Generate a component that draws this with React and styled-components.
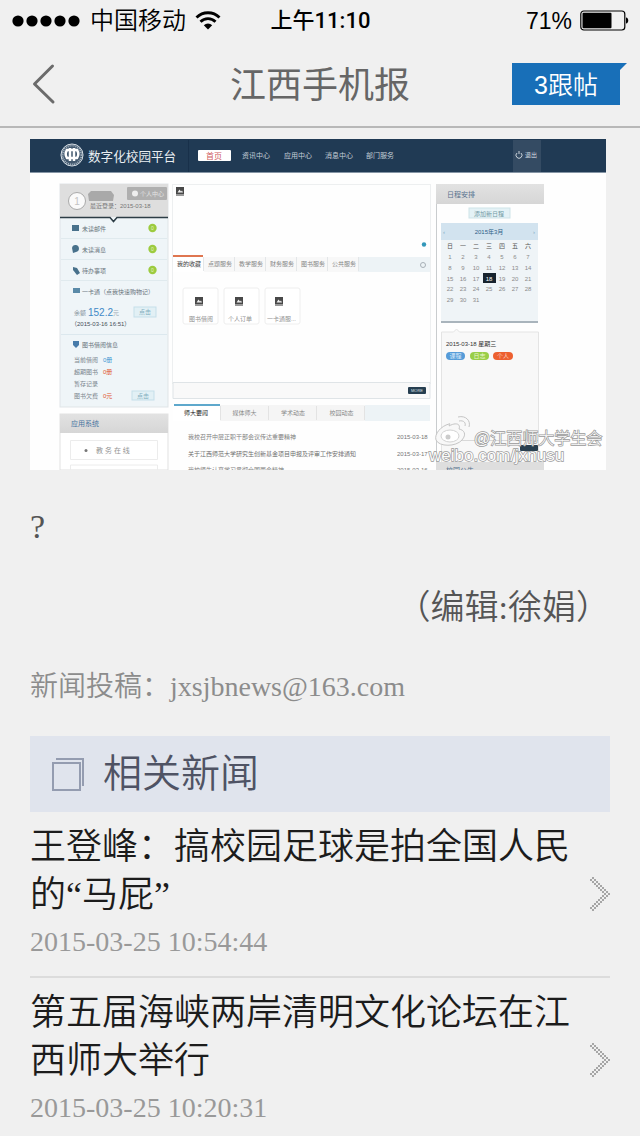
import React from "react";
import styled, { createGlobalStyle } from "styled-components";

const GlobalStyle = createGlobalStyle`
  * {
    box-sizing: border-box;
  }
  body {
    margin: 0;
    background: #f0f0f0;
    overflow-x: hidden;
  }
`;

const sans = `"Liberation Sans", "Noto Sans CJK SC", sans-serif`;
const serif = `"Liberation Serif", "Noto Sans CJK SC", serif`;

const Page = styled.div`
  display: flex;
  flex-direction: column;
  background: #f0f0f0;
  font-family: ${serif};
  font-weight: 350;
`;

const StatusBar = styled.div`
  display: grid;
  grid-template-columns: 1fr auto 1fr;
  align-items: center;
  height: 42px;
  padding: 0 11px 0 12px;
  font-family: ${sans};
  font-size: 24px;
  line-height: 42px;
  color: #000;
`;

const Carrier = styled.div`
  display: flex;
  align-items: center;
  gap: 9px;
`;

const Clock = styled.div`
  font-family: Roboto, "Noto Sans CJK SC", sans-serif;
  font-size: 22px;
  font-weight: 500;
`;

const Power = styled.div`
  display: flex;
  align-items: center;
  justify-content: flex-end;
  gap: 8px;
  font-size: 23px;
`;

const Header = styled.header`
  display: grid;
  grid-template-columns: 1fr auto 1fr;
  align-items: center;
  height: 86px;
  padding: 0 20px;
  border-bottom: 2px solid #b8b8b8;
  font-family: ${sans};
`;

const BackButton = styled.button`
  display: flex;
  width: 40px;
  padding: 0 0 0 10px;
  border: none;
  background: none;
  cursor: pointer;
`;

const HeaderTitle = styled.h1`
  margin: 0;
  padding-top: 4px;
  font-size: 36px;
  line-height: 48px;
  font-weight: 400;
  color: #666;
`;

const ReplyButton = styled.button`
  position: relative;
  justify-self: end;
  width: 108px;
  height: 42px;
  padding: 2px 0 0;
  border: none;
  background: #186fb8;
  color: #fff;
  font-family: ${sans};
  font-size: 25px;
  line-height: 40px;
  font-weight: 350;
  cursor: pointer;

  &::after {
    content: "";
    position: absolute;
    left: 100%;
    top: 0;
    border-top: 7px solid #186fb8;
    border-right: 7px solid transparent;
  }
`;

const Article = styled.main`
  display: flex;
  flex-direction: column;
  padding: 11px 30px 0;
`;

const Photo = styled.svg`
  display: block;
  width: calc(100% - 4px);
  height: auto;
  font-family: ${sans};
  font-weight: 400;
`;

const Paragraph = styled.p`
  margin: 33px 0 0;
  font-size: 34px;
  line-height: 48px;
  color: #555;
  text-align: ${(props) => (props.$right ? "right" : "left")};
`;

const Submission = styled.p`
  margin: 32px 0 26px;
  font-size: 28px;
  line-height: 46px;
  color: #8c8c8c;
`;

const MailLink = styled.a`
  color: inherit;
  text-decoration: none;
`;

const SectionTitle = styled.h2`
  display: flex;
  align-items: center;
  gap: 18px;
  height: 76px;
  margin: 0;
  padding: 0 22px;
  background: #e0e4ed;
  color: #4f5364;
  font-size: 39px;
  line-height: 76px;
  font-weight: 350;
`;

const NewsList = styled.ul`
  margin: 0;
  padding: 0;
  list-style: none;
`;

const NewsItem = styled.li`
  border-bottom: 2px solid #dcdcdc;
`;

const NewsLink = styled.a`
  display: flex;
  align-items: center;
  justify-content: space-between;
  gap: 10px;
  padding: 11px 0;
  text-decoration: none;
`;

const NewsBody = styled.div`
  flex: 1;
`;

const NewsTitle = styled.h3`
  margin: 0;
  font-size: 36px;
  line-height: 48px;
  font-weight: 350;
  color: #1c1c1c;
`;

const NewsTime = styled.time`
  display: block;
  font-size: 28px;
  line-height: 46px;
  color: #999;
`;

const news = [
  { title: "王登峰：搞校园足球是拍全国人民的“马屁”", time: "2015-03-25 10:54:44" },
  { title: "第五届海峡两岸清明文化论坛在江西师大举行", time: "2015-03-25 10:20:31" },
];

const SignalDots = () => (
  <svg width="69" height="14" viewBox="0 0 69 14">
    {[6, 20, 34, 48, 62].map((x) => (
      <circle key={x} cx={x} cy="7" r="5.6" />
    ))}
  </svg>
);

const WifiIcon = () => (
  <svg width="26" height="20" viewBox="0 0 26 20" fill="none" stroke="#000" strokeWidth="2.8">
    <path d="M1.5 6.5a16.3 16.3 0 0 1 23 0" />
    <path d="M5.500 10.800a10.600 10.600 0 0 1 15 0" />
    <path d="M13 18.500 8.800 14.200a6 6 0 0 1 8.400 0z" fill="#000" stroke="none" />
  </svg>
);

const BatteryIcon = () => (
  <svg width="49" height="22" viewBox="0 0 49 22">
    <rect x="0.8" y="1" width="44" height="19" rx="3" fill="none" stroke="#000" strokeWidth="1.2" />
    <rect x="2.5" y="2.7" width="29" height="15.6" rx="1" />
    <path d="M46 7.5c3 0 3 6 0 6z" />
  </svg>
);

const BackIcon = () => (
  <svg width="30" height="42" viewBox="0 0 30 42" fill="none" stroke="#6b6b6b" strokeWidth="3">
    <path d="M22.500 3 4.500 21l18.500 18" strokeLinecap="round" strokeLinejoin="round" />
  </svg>
);

const StackIcon = () => (
  <svg width="33" height="33" viewBox="0 0 33 33" fill="none" stroke="#949cb0" strokeWidth="2">
    <rect x="1" y="5" width="27" height="27" />
    <path d="M4 1h27v27" />
  </svg>
);

// arrow made of a 2px checker pattern, two cells per row
const ChevronIcon = () => {
  const cells = [];
  for (let row = 0; row < 17; row += 1) {
    const col = row <= 8 ? row : 16 - row;
    [col - 1, col + 1].forEach((c) => {
      if (c >= 0) {
        cells.push(<rect key={`${row}-${c}`} x={c * 2} y={row * 2} width="2" height="2" />);
      }
    });
  }
  return (
    <svg width="20" height="34" viewBox="0 0 20 34" fill="#a6a6a6">
      {cells}
    </svg>
  );
};

const menu = [
  [242, "资讯中心"],
  [284, "应用中心"],
  [325, "消息中心"],
  [366, "部门服务"],
];

const sideRows = [
  [228, "未读邮件"],
  [249, "未读消息"],
  [270, "待办事项"],
];

const serviceTabs = ["我的收藏", "点题服务", "教学服务", "财务服务", "图书服务", "公共服务"];
const newsTabs = ["师大要闻", "媒体师大", "学术动态", "校园动态"];
const weekDays = ["日", "一", "二", "三", "四", "五", "六"];
const monthDays = Array.from({ length: 31 }, (_, i) => i + 1);

const PicGlyph = ({ x, y }) => (
  <g>
    <rect x={x} y={y} width="8" height="9" fill="#484848" />
    <path d={`M${x + 1.5} ${y + 5.5}l2-3 1.5 2 1-1 1 2z`} fill="#eee" />
    <rect x={x} y={y + 7} width="8" height="2" fill="#999" />
  </g>
);

const PortalPhoto = () => (
  <Photo viewBox="30 139 576 331" role="img" aria-label="数字化校园平台">
    <defs>
      <linearGradient id="bar" x1="0" y1="0" x2="0" y2="1">
        <stop offset="0" stopColor="#e2e2e2" />
        <stop offset="1" stopColor="#d6d6d6" />
      </linearGradient>
    </defs>
    <rect x="30" y="139" width="576" height="331" fill="#fefefe" />

    <rect x="30" y="139" width="576" height="34" fill="#203a54" />
    <path d="M30 172.5h576" stroke="#8595a5" />
    <path d="M188.5 140v32" stroke="#18304a" />
    <circle cx="72" cy="155" r="11" fill="#42586e" stroke="#dbe2e8" />
    <circle cx="72" cy="155" r="9.5" fill="none" stroke="#a8b6c3" strokeWidth="2" strokeDasharray="1 1" />
    <path
      d="M67 150c-2 3-2 5 0 8h10c2-3 2-5 0-8zM70 148v13M74 148v13"
      fill="none"
      stroke="#fff"
      strokeWidth="2.500"
    />
    <text x="88" y="161" fontSize="12.600" fill="#e8edf1">数字化校园平台</text>
    <rect x="198" y="150" width="33" height="11" rx="1" fill="#fff" />
    <text x="214" y="159" fontSize="8" textAnchor="middle" fill="#cf5a5e">首页</text>
    {menu.map(([x, label]) => (
      <text key={label} x={x} y="158" fontSize="7" fill="#c4ced7">{label}</text>
    ))}
    <rect x="513" y="140" width="28" height="32" fill="#344b63" />
    <path d="M517 153a3 3 0 1 0 4 0M519 151v3" fill="none" stroke="#c9d2da" />
    <text x="525" y="157" fontSize="6" fill="#d5dce2">退出</text>

    <rect x="60" y="184" width="108" height="223" fill="#eff5f8" stroke="#dfe4e7" />
    <rect x="60" y="184" width="108" height="33" fill="#dedede" />
    <circle cx="77" cy="201" r="8.5" fill="#fafafa" stroke="#aaa" />
    <text x="77" y="205" fontSize="10" textAnchor="middle" fill="#c3c3c3">1</text>
    <path d="M91 191h20l3 4-1 6H89l-1-7z" fill="#a9a9a9" />
    <rect x="127" y="187" width="40" height="13" rx="1" fill="#afafaf" />
    <circle cx="135" cy="193.500" r="3" fill="#eee" />
    <text x="140" y="196" fontSize="6" fill="#e4e4e4">个人中心</text>
    <text x="90" y="208" fontSize="6" fill="#777">最近登录：2015-03-18</text>
    <path d="M60 217.500h50l3.500 4 3.500-4h51" fill="none" stroke="#2d3d46" strokeWidth="1.500" />
    {sideRows.map(([y, label]) => (
      <g key={label}>
        <path d={`M61 ${y + 10.5}h106`} stroke="#e0eaee" />
        <text x="82" y={y + 3} fontSize="6" fill="#68747c">{label}</text>
        <circle cx="152.500" cy={y} r="4.200" fill="#9ccb3f" />
        <text x="152.500" y={y + 2} fontSize="5" textAnchor="middle" fill="#e4f2c8">0</text>
      </g>
    ))}
    <rect x="72" y="225" width="7" height="6" fill="#48718b" />
    <path d="M72 248a3.500 3.500 0 1 1 4 4l-3 1z" fill="#48718b" />
    <path d="M73 267l4 1 3 5-3 2-4-5z" fill="#48718b" />
    <rect x="73" y="288" width="7" height="5" fill="#5a8aa8" />
    <text x="82" y="294" fontSize="6" fill="#68747c">一卡通（点我快速购物记）</text>
    <text x="74" y="315" fontSize="6" fill="#84919a">余额</text>
    <text x="88" y="316" fontSize="10" fill="#4089c7">152.2</text>
    <text x="113" y="315" fontSize="6" fill="#9aabb7">元</text>
    <rect x="134" y="307" width="22" height="10" fill="#e2f0f5" stroke="#c5dfe9" />
    <text x="145" y="314" fontSize="6" textAnchor="middle" fill="#81aebe">点击</text>
    <text x="71" y="326" fontSize="6" fill="#465058">（2015-03-16 16:51）</text>
    <path d="M61 334.500h106" stroke="#dce8ee" />
    <path d="M73 341h6v4l-3 3-3-3z" fill="#477baa" />
    <text x="82" y="347" fontSize="6" fill="#68747c">图书借阅信息</text>
    {["当前借阅", "超期图书", "暂存记录", "图书欠费"].map((label, i) => (
      <text key={label} x="74" y={362 + i * 12} fontSize="6" fill="#7b868e">{label}</text>
    ))}
    <text x="103" y="362" fontSize="6" fill="#3c96d2">0册</text>
    <text x="103" y="374" fontSize="6" fill="#e05630">0册</text>
    <text x="103" y="398" fontSize="6" fill="#e05630">0元</text>
    <rect x="132" y="391" width="22" height="9" fill="#e2f0f5" stroke="#c5dfe9" />
    <text x="143" y="398" fontSize="6" textAnchor="middle" fill="#81aebe">点击</text>
    <rect x="60" y="414" width="108" height="56" fill="#fff" stroke="#e1e1e1" />
    <rect x="60" y="414" width="108" height="19" fill="url(#bar)" />
    <text x="71" y="426" fontSize="7" fill="#4975a0">应用系统</text>
    <path d="M70.500 440.500h87v19h-87zM70.500 470v-5h87v5" fill="none" stroke="#ececec" />
    <circle cx="86" cy="450.500" r="1.500" fill="#777" />
    <text x="96" y="453" fontSize="7" fill="#949494">教 务 在 线</text>

    <rect x="172.500" y="184.500" width="258" height="199" fill="#fefefe" stroke="#edeff0" />
    <PicGlyph x={176} y={187} />
    <circle cx="424" cy="244.500" r="2.200" fill="#3297b9" />
    <rect x="173" y="257" width="257" height="15" fill="#edf3f6" />
    <rect x="173" y="257" width="185" height="15" fill="#f8f8f8" />
    <rect x="173" y="257" width="31" height="15" fill="#fff" />
    <rect x="173" y="255" width="30" height="2" fill="#df7650" />
    {serviceTabs.map((label, i) => (
      <g key={label}>
        <text x={177 + i * 31} y="266" fontSize="6" fill={i ? "#878787" : "#3e3e3e"}>{label}</text>
        <path d={`M${203.5 + i * 31} 257v14`} stroke="#e3e6e8" />
      </g>
    ))}
    <circle cx="423" cy="265" r="2.500" fill="none" stroke="#a7b0b6" />
    {["图书借阅", "个人订单", "一卡通服..."].map((label, i) => (
      <g key={label}>
        <rect x={183 + i * 41} y="288" width="35" height="36" rx="2" fill="#fff" stroke="#eee" />
        <PicGlyph x={195 + i * 40} y={297} />
        <text x={189 + i * 39} y="321" fontSize="6" fill="#929292">{label}</text>
      </g>
    ))}
    <path d="M173 382.500h257v16H173z" fill="#f9f9f9" stroke="#dfe4e7" />
    <rect x="408" y="387" width="18" height="7" rx="1" fill="#263e50" />
    <text x="417" y="392" fontSize="4" textAnchor="middle" fill="#dce2e6">MORE</text>
    <rect x="173" y="405" width="257" height="16" fill="#edf3f6" />
    <rect x="173" y="405" width="192" height="16" fill="#f5f5f5" />
    <rect x="173" y="405" width="47" height="16" fill="#fff" />
    <rect x="174" y="404" width="46" height="2" fill="#5ea8cc" />
    {newsTabs.map((label, i) => (
      <g key={label}>
        <text x={184 + i * 48.5} y="415" fontSize="6" fill={i ? "#898989" : "#222"}>{label}</text>
        <path d={`M${220.5 + i * 48} 406v14`} stroke="#e3e3e3" />
      </g>
    ))}
    <text x="188" y="439" fontSize="6" fill="#818181">我校召开中层正职干部会议传达重要精神</text>
    <text x="188" y="456" fontSize="6" fill="#6e6e6e">关于江西师范大学研究生创新基金项目申报及评审工作安排通知</text>
    <text x="188" y="472" fontSize="6" fill="#818181">我校师生认真学习贯彻全国两会精神</text>
    <text x="397" y="439" fontSize="6" fill="#777">2015-03-18</text>
    <text x="397" y="456" fontSize="6" fill="#777">2015-03-17</text>
    <text x="397" y="472" fontSize="6" fill="#777">2015-03-16</text>

    <path d="M436.500 184v286" stroke="#c9ccce" />
    <rect x="436" y="184" width="108" height="20" fill="url(#bar)" />
    <text x="447" y="197" fontSize="7" fill="#57718d">日程安排</text>
    <rect x="469" y="208" width="41" height="10" fill="#e4f2f6" stroke="#cee3e8" />
    <text x="489" y="216" fontSize="6" textAnchor="middle" fill="#729aa4">添加新日程</text>
    <rect x="441" y="223" width="97" height="99" fill="#eff4f7" />
    <rect x="441" y="223" width="97" height="17" fill="#d2e3ef" />
    <path d="M441 322h97" stroke="#a9b4bc" strokeWidth="2" />
    <text x="489" y="234" fontSize="6" textAnchor="middle" fill="#2c6087">2015年3月</text>
    <text x="443" y="234" fontSize="6" fill="#82a8bf">‹</text>
    <text x="533" y="234" fontSize="6" fill="#82a8bf">›</text>
    {weekDays.map((day, i) => (
      <text key={day} x={450 + i * 13} y="248" fontSize="6" textAnchor="middle" fill="#555">{day}</text>
    ))}
    <rect x="483" y="273" width="13" height="10" fill="#17232e" />
    {monthDays.map((day) => (
      <text
        key={day}
        x={450 + ((day - 1) % 7) * 13}
        y={259 + Math.floor((day - 1) / 7) * 10.8}
        fontSize="6"
        textAnchor="middle"
        fill={day === 18 ? "#fff" : "#8b8b8b"}
      >
        {day}
      </text>
    ))}
    <path d="M441.500 470V332h12l3-3 3 3h79v138" fill="#f8f8f8" stroke="#e4e4e4" />
    <text x="446" y="346" fontSize="6" fill="#333">2015-03-18 星期三</text>
    <rect x="446" y="352" width="19" height="8" rx="4" fill="#559bd8" />
    <rect x="470" y="352" width="19" height="8" rx="4" fill="#99ce47" />
    <rect x="493" y="352" width="20" height="8" rx="4" fill="#ed6030" />
    <text x="455.500" y="358" fontSize="6" textAnchor="middle" fill="#d8eafa">课程</text>
    <text x="479.500" y="358" fontSize="6" textAnchor="middle" fill="#e9f6d2">日志</text>
    <text x="503" y="358" fontSize="6" textAnchor="middle" fill="#fbd3c4">个人</text>
    <path d="M441 440.500h97" stroke="#d8d8d8" />
    <rect x="520" y="445" width="18" height="6" rx="1" fill="#2a4050" />
    <rect x="436" y="462" width="108" height="8" fill="#dedede" />
    <text x="446" y="473" fontSize="7" fill="#54718d">校园公告</text>

    <path
      d="M449 424c-8 2-15 10-13 16 3 7 20 7 26 0 5-6 2-10-3-11 2-5-3-7-10-3 1-2 1-3 0-2zM458 417c8-2 13 4 11 10M459 421c5-1 7 2 6 5"
      fill="#f8f8f8"
      stroke="#c5c5c5"
    />
    <ellipse cx="450" cy="436" rx="9" ry="6" fill="#fff" stroke="#d2d2d2" />
    <circle cx="448" cy="437" r="2.500" fill="#ccc" />
    <g fill="#fbfbfb" stroke="#999" strokeWidth="1.400" paintOrder="stroke">
      <text x="474" y="444" fontSize="16" fontWeight="300">@江西师大学生会</text>
      <text x="429" y="461" fontSize="17">weibo.com/jxnusu</text>
    </g>
  </Photo>
);

const App = () => {
  return (
    <Page>
      <GlobalStyle />
      <StatusBar>
        <Carrier>
          <SignalDots />
          <span>中国移动</span>
          <WifiIcon />
        </Carrier>
        <Clock>上午11:10</Clock>
        <Power>
          <span>71%</span>
          <BatteryIcon />
        </Power>
      </StatusBar>
      <Header>
        <BackButton aria-label="返回">
          <BackIcon />
        </BackButton>
        <HeaderTitle>江西手机报</HeaderTitle>
        <ReplyButton>3跟帖</ReplyButton>
      </Header>
      <Article>
        <PortalPhoto />
        <Paragraph>?</Paragraph>
        <Paragraph $right>（编辑:徐娟）</Paragraph>
        <Submission>
          新闻投稿：<MailLink href="mailto:jxsjbnews@163.com">jxsjbnews@163.com</MailLink>
        </Submission>
        <SectionTitle>
          <StackIcon />
          相关新闻
        </SectionTitle>
        <NewsList>
          {news.map((item) => (
            <NewsItem key={item.time}>
              <NewsLink href="#">
                <NewsBody>
                  <NewsTitle>{item.title}</NewsTitle>
                  <NewsTime>{item.time}</NewsTime>
                </NewsBody>
                <ChevronIcon />
              </NewsLink>
            </NewsItem>
          ))}
        </NewsList>
      </Article>
    </Page>
  );
};

export default App;
